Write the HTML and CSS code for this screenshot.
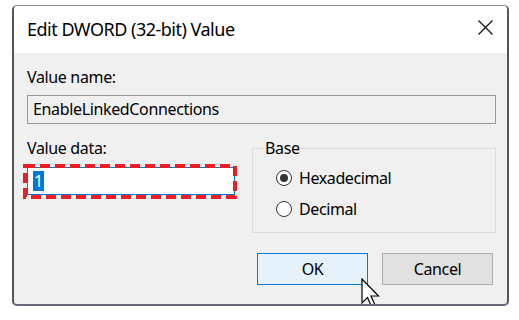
FILE: index.html
```html
<!DOCTYPE html>
<html>
<head>
<meta charset="utf-8">
<link rel="stylesheet" href="styles.css">
</head>
<body>
<div class="dialog">
  <div class="titlebar">
    <span class="title">Edit DWORD (32-bit) Value</span>
    <svg class="close" width="15" height="15" viewBox="0 0 15 15"><path d="M0.5 0.5L14.5 14.5M14.5 0.5L0.5 14.5" stroke="#1a1a1a" stroke-width="1.4" fill="none"/></svg>
  </div>
  <div class="body">
    <div class="label">Value name:</div>
    <div class="namebox">EnableLinkedConnections</div>
    <div class="row">
      <div class="datacol">
        <div class="label">Value data:</div>
        <div class="databox"><span class="sel">1</span>
          <svg class="highlight" width="214" height="35" viewBox="0 0 214 35"><rect x="2" y="2" width="210" height="31" fill="none" stroke="#ee1c24" stroke-width="4" stroke-dasharray="10 5"/></svg>
        </div>
      </div>
      <div class="group">
        <span class="legend">Base</span>
        <div class="radio"><span class="dot checked"></span><span>Hexadecimal</span></div>
        <div class="radio"><span class="dot"></span><span>Decimal</span></div>
      </div>
    </div>
    <div class="buttons">
      <div class="btn ok">OK</div>
      <div class="btn cancel">Cancel</div>
    </div>
  </div>
  <svg class="cursor" width="20" height="30" viewBox="0 0 20 30"><path d="M1 1 L1 25 L6.5 19.5 L10.5 28.5 L14 27 L10 18 L17.5 18 Z" fill="#fff" stroke="#000" stroke-width="1.2" stroke-linejoin="miter"/></svg>
</div>
</body>
</html>
```
FILE: styles.css
```css
html, body {
  margin: 0;
  padding: 0;
  background: #ffffff;
}
body {
  font-family: "Noto Sans", "Open Sans", sans-serif;
  font-size: 16px;
  color: #000;
}
.dialog {
  position: relative;
  box-sizing: border-box;
  margin: 5px 0 0 12px;
  width: 497px;
  height: 301px;
  border-top: 1px solid #8c8c8c;
  border-left: 2px solid #555555;
  border-right: 2px solid #555555;
  border-bottom: 2px solid #66667a;
  border-radius: 5px;
  background: #f0f0f0;
  overflow: hidden;
}
.titlebar {
  height: 47px;
  box-sizing: border-box;
  background: #ffffff;
  display: flex;
  justify-content: space-between;
  align-items: flex-start;
  padding: 11px 14px 0 13px;
}
.title {
  font-size: 18px;
  line-height: 24px;
  letter-spacing: -0.5px;
}
.close {
  margin-top: 3px;
  display: block;
}
.body {
  padding: 0 11px 0 13px;
}
.label {
  line-height: 20px;
  letter-spacing: -0.35px;
}
.body > .label {
  margin-top: 14px;
}
.namebox {
  margin-top: 8px;
  box-sizing: border-box;
  height: 29px;
  border: 1px solid #9a9a9a;
  background: #f0f0f0;
  padding: 0 5px;
  line-height: 27px;
  letter-spacing: -0.35px;
}
.row {
  margin-top: 14px;
  display: flex;
  gap: 17px;
}
.datacol {
  width: 208px;
}
.databox {
  position: relative;
  margin-top: 9px;
  box-sizing: border-box;
  width: 208px;
  height: 28px;
  border: 1px solid #0078d7;
  background: #ffffff;
  padding: 2px 0 0 5px;
}
.sel {
  display: inline-block;
  background: #0078d7;
  color: #ffffff;
  line-height: 20px;
  padding: 0 1px;
}
.highlight {
  position: absolute;
  left: -5px;
  top: -4px;
}
.group {
  position: relative;
  margin-top: 10px;
  box-sizing: border-box;
  width: 244px;
  height: 85px;
  border: 1px solid #dcdcdc;
  padding: 19px 0 0 23px;
  display: flex;
  flex-direction: column;
  gap: 11px;
}
.legend {
  position: absolute;
  top: -11px;
  left: 11px;
  padding: 0 1px;
  line-height: 20px;
  background: #f0f0f0;
  letter-spacing: -0.35px;
}
.radio {
  display: flex;
  align-items: center;
  gap: 7px;
  height: 20px;
  letter-spacing: -0.4px;
}
.dot {
  box-sizing: border-box;
  width: 16px;
  height: 16px;
  border: 1.5px solid #333333;
  border-radius: 50%;
  background: #ffffff;
  display: flex;
  align-items: center;
  justify-content: center;
}
.dot.checked::after {
  content: "";
  width: 8px;
  height: 8px;
  border-radius: 50%;
  background: #333333;
}
.buttons {
  margin-top: 20px;
  display: flex;
  justify-content: flex-end;
  gap: 14px;
  padding-right: 3px;
}
.btn {
  box-sizing: border-box;
  width: 111px;
  height: 32px;
  display: flex;
  align-items: center;
  justify-content: center;
  letter-spacing: -0.35px;
}
.ok {
  border: 1px solid #0078d7;
  background: #e5f1fb;
}
.cancel {
  border: 1px solid #adadad;
  background: #e1e1e1;
}
.cursor {
  position: absolute;
  left: 347px;
  top: 272px;
}
```
